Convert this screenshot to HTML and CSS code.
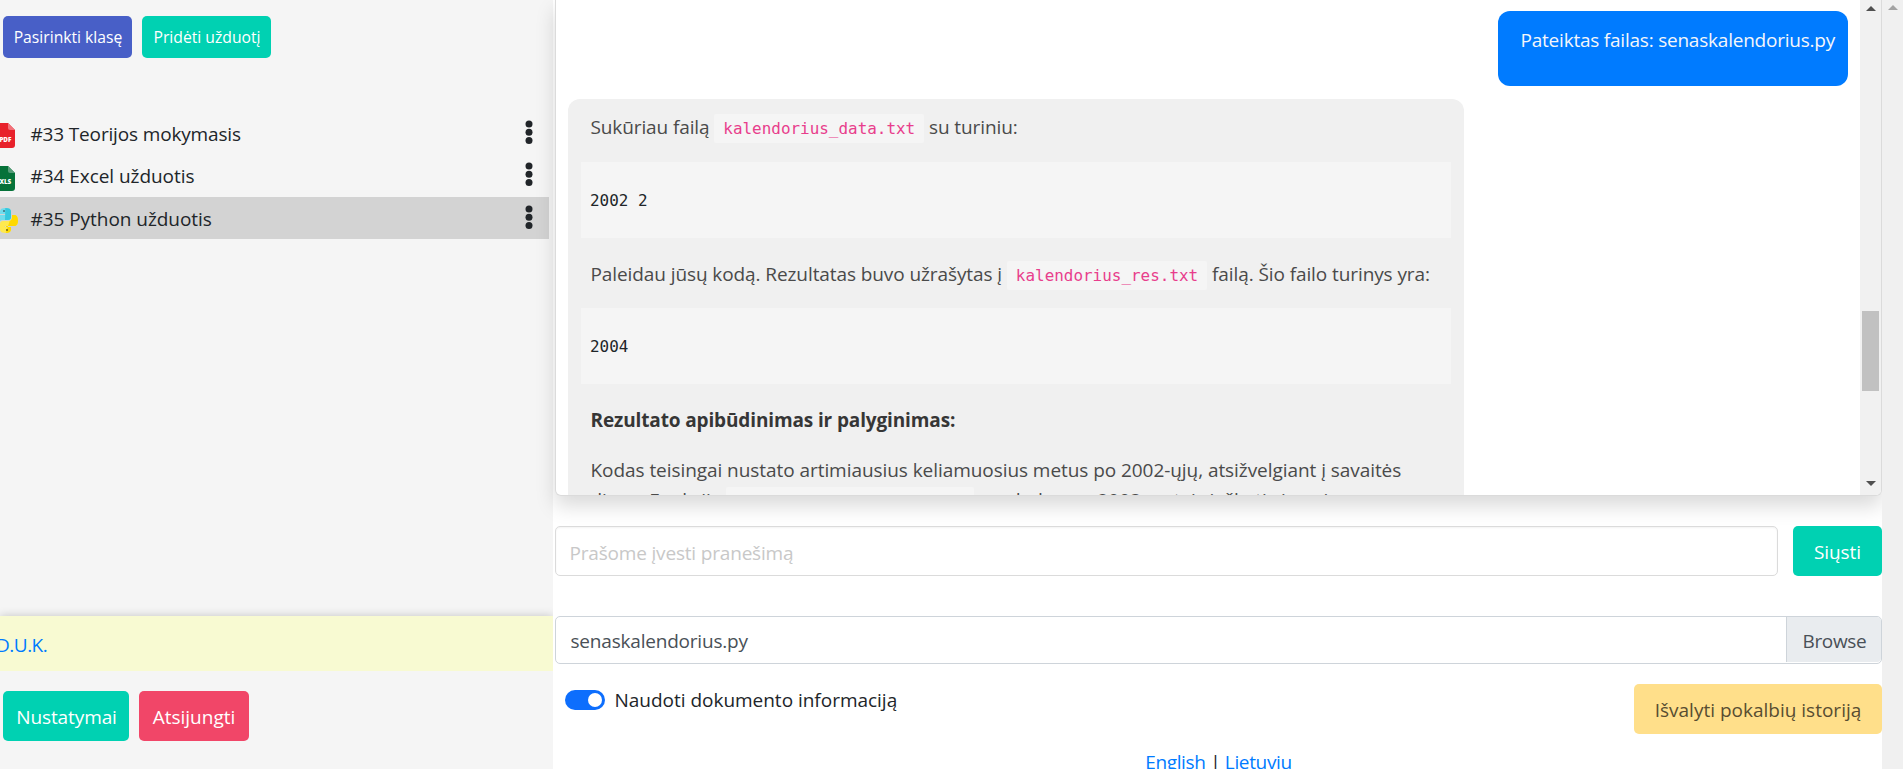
FILE: index.html
```html
<!DOCTYPE html>
<html lang="lt">
<head>
<meta charset="utf-8">
<title>Užduotys</title>
<link rel="stylesheet" href="styles.css">
</head>
<body>
<div class="app">
  <aside class="sidebar">
    <div class="top-actions">
      <button class="btn btn-small btn-indigo">Pasirinkti klasę</button>
      <button class="btn btn-small btn-teal">Pridėti užduotį</button>
    </div>
    <ul class="tasks">
      <li class="task">
        <svg class="task-icon" viewBox="0 0 25 25"><path fill="#e8212b" d="M6 0h12l7 7v15a3 3 0 0 1-3 3H6a3 3 0 0 1-3-3V3a3 3 0 0 1 3-3z" transform="translate(-3)"/><path fill="#f27179" d="M15 0l7 7h-5a2 2 0 0 1-2-2z"/><text class="badge-text" x="6.4" y="18.6">PDF</text></svg>
        <span class="task-name t33">#33 Teorijos mokymasis</span>
        <svg class="dots" viewBox="0 0 8 26"><circle cx="4" cy="4" r="3.5"/><circle cx="4" cy="12.3" r="3.5"/><circle cx="4" cy="20.5" r="3.5"/></svg>
      </li>
      <li class="task">
        <svg class="task-icon low" viewBox="0 0 25 25"><path fill="#067239" d="M6 0h12l7 7v15a3 3 0 0 1-3 3H6a3 3 0 0 1-3-3V3a3 3 0 0 1 3-3z" transform="translate(-3)"/><path fill="#559c77" d="M15 0l7 7h-5a2 2 0 0 1-2-2z"/><text class="badge-text" x="6.4" y="18.4">XLS</text></svg>
        <span class="task-name">#34 Excel užduotis</span>
        <svg class="dots" viewBox="0 0 8 26"><circle cx="4" cy="4" r="3.5"/><circle cx="4" cy="12.3" r="3.5"/><circle cx="4" cy="20.5" r="3.5"/></svg>
      </li>
      <li class="task active">
        <svg class="task-icon" viewBox="0 0 25 25"><path fill="#6fdcec" d="M12.3 0C9 0 7 1 7 3.5V6h6v1H3.500C1 7 0 9.500 0 12.500s1 5.500 3.500 5.500H6v-2.500C6 13 8 12 10 12h5c2 0 3-1 3-3V3.500C18 1 16 0 12.300 0z"/><path fill="#35c8de" d="M12.300 0C16 0 18 1 18 3.500V9c0 2-1 3-3 3h-3z"/><path fill="#ffe94f" d="M12.700 25c3.300 0 5.300-1 5.300-3.500V19h-6v-1h9.500c2.500 0 3.500-2.500 3.500-5.500S24 7 21.500 7H19v2.500C19 12 17 13 15 13h-5c-2 0-3 1-3 3v5.500C7 24 9 25 12.700 25z"/><path fill="#ffd900" d="M19 7h2.500C24 7 25 9.500 25 12.500s-1 5.500-3.500 5.500H13v1h5v2.500c0 2.500-2 3.500-5.300 3.500l4-12C18 12.500 19 11.500 19 9.500z"/><circle cx="11" cy="3" r="1" fill="#3a6c78"/><circle cx="14" cy="22" r="1" fill="#6b5c10"/></svg>
        <span class="task-name t35">#35 Python užduotis</span>
        <svg class="dots" viewBox="0 0 8 26"><circle cx="4" cy="4" r="3.5"/><circle cx="4" cy="12.3" r="3.5"/><circle cx="4" cy="20.5" r="3.5"/></svg>
      </li>
    </ul>
    <div class="faq"><a href="#">D.U.K.</a></div>
    <div class="bottom-actions">
      <button class="btn btn-settings btn-teal">Nustatymai</button>
      <button class="btn btn-logout btn-red">Atsijungti</button>
    </div>
  </aside>

  <main class="main">
    <section class="chat">
      <div class="messages">
        <div class="msg user">Pateiktas failas: senaskalendorius.py</div>
        <div class="msg bot">
          <p class="p1">Sukūriau failą <code>kalendorius_data.txt</code> su turiniu:</p>
          <pre>2002 2</pre>
          <p class="p2">Paleidau jūsų kodą. Rezultatas buvo užrašytas į <code>kalendorius_res.txt</code> failą. Šio failo turinys yra:</p>
          <pre>2004</pre>
          <p class="heading">Rezultato apibūdinimas ir palyginimas:</p>
          <p class="p3">Kodas teisingai nustato artimiausius keliamuosius metus po 2002-ųjų, atsižvelgiant į savaitės<br>dieną. Funkcija <code>sumatorustatus_tarpmenus</code> pradeda nuo 2003 metais ieškoti visomis</p>
        </div>
      </div>
      <div class="scrollbar">
        <svg class="arrow" viewBox="0 0 10 5"><path d="M0 5L5 0l5 5z"/></svg>
        <div class="thumb"></div>
        <svg class="arrow" viewBox="0 0 10 5"><path d="M0 0l5 5 5-5z"/></svg>
      </div>
    </section>

    <form class="composer">
      <input class="prompt" type="text" placeholder="Prašome įvesti pranešimą">
      <button class="btn btn-send btn-teal" type="button">Siųsti</button>
    </form>

    <div class="file">
      <span class="file-name">senaskalendorius.py</span>
      <span class="browse">Browse</span>
    </div>

    <div class="options">
      <div class="switch-row"><span class="switch"></span><span class="switch-label">Naudoti dokumento informaciją</span></div>
      <button class="btn btn-clear">Išvalyti pokalbių istoriją</button>
    </div>

    <footer class="langs"><a href="#">English</a> | <a href="#">Lietuvių</a></footer>
  </main>

  <div class="page-scroll"><svg class="arrow muted" viewBox="0 0 10 5"><path d="M0 5L5 0l5 5z"/></svg></div>
</div>
</body>
</html>
```
FILE: styles.css
```css
* { box-sizing: border-box; }

html, body { margin: 0; height: 100%; overflow: hidden; }

body {
  font: 19px/30px "Open Sans", "Noto Sans", sans-serif;
  color: #212529;
  background: #fff;
}

a { color: #007bff; text-decoration: none; }
p, pre, ul { margin: 0; padding: 0; }

.app { display: flex; width: 1903px; height: 769px; overflow: hidden; }

/* Buttons */
.btn {
  border: 0;
  border-radius: 5px;
  padding: 1px 0 0;
  height: 50px;
  font: 19px/50px "Open Sans", "Noto Sans", sans-serif;
  color: #fff;
  text-align: center;
  white-space: nowrap;
}
.btn-small { width: 129px; height: 42px; padding: 0 0 0 1px; font-size: 15.7px; line-height: 42px; }
.btn-indigo { background: #485fc7; }
.btn-teal { background: #00d1b2; }
.btn-red { background: #f14668; }
.btn-settings { width: 126px; letter-spacing: -0.1px; padding-left: 1px; }
.btn-logout { width: 110px; }
.btn-send { width: 89px; font-weight: 500; letter-spacing: -0.1px; }
.btn-clear { width: 248px; background: #ffdf8a; color: #584d31; }

/* Sidebar */
.sidebar {
  display: flex;
  flex-direction: column;
  width: 553px;
  flex: none;
  background: #f5f5f5;
  overflow: hidden;
}
.top-actions { display: flex; gap: 10px; padding: 16px 0 0 3px; height: 112px; }
.tasks { list-style: none; height: 504px; }
.task {
  display: flex;
  align-items: flex-start;
  width: 549px;
  height: 42.4px;
  padding-left: 31px;
  line-height: 45px;
}
.task.active { background: #d3d3d3; }
.task-icon { width: 25px; height: 25px; margin: 11px 13px 0 -38px; flex: none; }
.task-icon.low { margin-top: 12px; }
.task-name { flex: 1; margin-left: -0.5px; letter-spacing: -0.05px; }
.t33 { letter-spacing: -0.16px; }
.badge-text { font: 800 6.3px "Open Sans", sans-serif; fill: #fff; }
.dots { width: 8px; height: 26px; margin: 8px 16.5px 0 0; fill: #212529; }
.faq {
  height: 55px;
  flex: none;
  background: #f8fad2;
  box-shadow: 0 0 9px rgba(0, 0, 0, 0.2);
  line-height: 59px;
}
.faq a { margin-left: -4px; letter-spacing: -0.5px; }
.bottom-actions { display: flex; flex: 1; gap: 10px; padding: 20px 0 0 3px; background: #f5f5f5; }

/* Main column */
.main { display: flex; flex-direction: column; width: 1329px; flex: none; padding-left: 2px; }

.chat {
  display: flex;
  height: 496px;
  flex: none;
  border: 1px solid #dbdbdb;
  border-top: 0;
  border-radius: 0 0 6px 6px;
  background: #fff;
  box-shadow: 0 10px 20px rgba(0, 0, 0, 0.15);
  overflow: hidden;
}
.messages {
  display: flex;
  flex-direction: column;
  flex: 1;
  gap: 13px;
  padding: 11px 12px 0;
  overflow: hidden;
}
.msg { flex: none; border-radius: 12px; }
.user {
  align-self: flex-end;
  width: 350px;
  height: 75px;
  padding: 14px 0 0 22.5px;
  background: #007bff;
  color: #f4f6fa;
  letter-spacing: -0.22px;
  white-space: nowrap;
}
.bot {
  width: 896px;
  padding: 13px 12px 20px 22.5px;
  background: #f0f0f0;
  color: #4a4a4a;
  white-space: nowrap;
}
.bot p { padding-top: 1px; margin-bottom: 19px; }
.bot .p1 { padding-top: 0; margin-bottom: 20px; }
.p1 { letter-spacing: -0.11px; }
.p2 { letter-spacing: -0.09px; }
.p3 { letter-spacing: -0.06px; }
.heading { font-weight: 700; color: #363636; letter-spacing: -0.13px; }

code {
  padding: 5.2px 9px 5px;
  background: #f5f5f5;
  border-radius: 2px;
  color: #e83e8c;
  font: 15.95px "DejaVu Sans Mono", monospace;
  letter-spacing: 0;
}
pre {
  width: 870px;
  height: 76px;
  margin: 0 0 20px -9.5px;
  padding: 23.5px 9px 0;
  background: #f5f5f5;
  color: #212529;
  font: 15.95px/30px "DejaVu Sans Mono", monospace;
}

.scrollbar {
  display: flex;
  flex-direction: column;
  align-items: center;
  width: 21px;
  padding: 6px 0 9px;
  background: #f1f1f1;
}
.arrow { width: 10px; height: 5px; fill: #505050; flex: none; }
.thumb { width: 17px; height: 80px; margin: 300px 0 auto; background: #c1c1c1; }

.composer { display: flex; justify-content: space-between; margin-top: 30px; }
.prompt {
  width: 1223px;
  height: 50px;
  border: 1px solid #dbdbdb;
  border-radius: 5px;
  padding: 3px 13.5px 0;
  background: transparent;
  box-shadow: inset 0 1px 2px rgba(10, 10, 10, 0.05);
  font: 19px "Open Sans", "Noto Sans", sans-serif;
  letter-spacing: -0.18px;
}
.prompt::placeholder { color: #c8c8c8; opacity: 1; }

.file {
  display: flex;
  justify-content: space-between;
  height: 48px;
  margin-top: 40px;
  border: 1px solid #ced4da;
  border-radius: 5px;
  color: #495057;
  line-height: 48px;
}
.file-name { padding-left: 14.5px; letter-spacing: -0.2px; }
.browse {
  width: 95px;
  height: 45px;
  padding-left: 15.5px;
  background: #e9ecef;
  border-left: 1px solid #ced4da;
  border-radius: 0 4px 4px 0;
  letter-spacing: -0.35px;
}

.options { display: flex; justify-content: space-between; height: 50px; margin-top: 20px; }
.switch-row { display: flex; gap: 9.5px; padding: 0 0 0 10px; line-height: 32px; letter-spacing: -0.02px; }
.switch {
  display: flex;
  width: 40px;
  height: 20px;
  margin-top: 6px;
  padding: 3px;
  justify-content: flex-end;
  border-radius: 10px;
  background: #0d6efd;
}
.switch::after { content: ""; width: 14px; height: 14px; border-radius: 50%; background: #fff; }

.langs { margin-top: 13px; text-align: center; letter-spacing: -0.35px; white-space: nowrap; }

.page-scroll { display: flex; justify-content: center; flex: 1; padding-top: 5px; background: #f0f0f0; }
.arrow.muted { fill: #a3a3a3; }
```
